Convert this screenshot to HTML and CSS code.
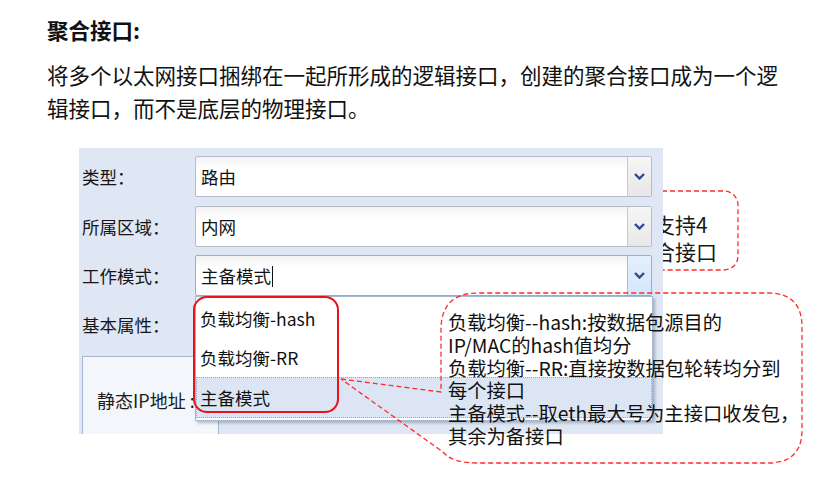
FILE: index.html
```html
<!DOCTYPE html>
<html lang="zh-CN">
<head>
  <meta charset="UTF-8">
  <title>聚合接口</title>
  <link rel="stylesheet" href="styles.css">
</head>
<body>
  <div class="page">
    <h3 class="title">聚合接口:</h3>
    <p class="desc">将多个以太网接口捆绑在一起所形成的逻辑接口，创建的聚合接口成为一个逻<br>辑接口，而不是底层的物理接口。</p>

    <!-- 面板后面的小注释 -->
    <svg class="note-small-frame" width="829" height="494" viewBox="0 0 829 494">
      <rect x="560" y="191" width="178" height="79" rx="14" ry="14" fill="none" stroke="#ff2a2a" stroke-width="1.3" stroke-dasharray="5 3"/>
    </svg>
    <div class="note-small">最多支持4<br>个聚合接口</div>

    <div class="panel">
      <div class="row">
        <span class="label">类型：</span>
        <div class="combo">
          <span class="combo-text">路由</span>
          <span class="combo-btn"><svg width="11" height="7" viewBox="0 0 11 7"><path d="M1 1 L5.5 5.5 L10 1" fill="none" stroke="#30498a" stroke-width="2.4"/></svg></span>
        </div>
      </div>
      <div class="row">
        <span class="label">所属区域：</span>
        <div class="combo">
          <span class="combo-text">内网</span>
          <span class="combo-btn"><svg width="11" height="7" viewBox="0 0 11 7"><path d="M1 1 L5.5 5.5 L10 1" fill="none" stroke="#30498a" stroke-width="2.4"/></svg></span>
        </div>
      </div>
      <div class="row">
        <span class="label">工作模式：</span>
        <div class="combo combo-open">
          <span class="combo-text">主备模式<span class="caret"></span></span>
          <span class="combo-btn"><svg width="11" height="7" viewBox="0 0 11 7"><path d="M1 1 L5.5 5.5 L10 1" fill="none" stroke="#30498a" stroke-width="2.4"/></svg></span>

          <div class="combo-list">
            <div class="combo-item">负载均衡-hash</div>
            <div class="combo-item">负载均衡-RR</div>
            <div class="combo-item selected">主备模式</div>
            <div class="mark"></div>
          </div>
        </div>
      </div>
      <div class="row row-plain">
        <span class="label">基本属性：</span>
      </div>
      <div class="subbox">静态IP地址 :</div>
    </div>

    <!-- 说明气泡 -->
    <svg class="note-frame" width="829" height="494" viewBox="0 0 829 494">
      <path d="M341 379 L441 392 L441 330 Q441 293 478 293 L768 293 Q802 293 802 327 L802 430 Q802 463 768 463 L478 463 Q452 463 443 452 Z" fill="none" stroke="#ff2a2a" stroke-width="1.3" stroke-dasharray="5 3"/>
    </svg>
    <div class="note-text">负载均衡--hash:按数据包源目的<br>IP/MAC的hash值均分<br>负载均衡--RR:直接按数据包轮转均分到<br>每个接口<br>主备模式--取eth最大号为主接口收发包，<br>其余为备接口</div>
  </div>
</body>
</html>
```

FILE: styles.css
```css
body {
  margin: 0;
  padding: 0;
  background-color: #ffffff;
  color: #111;
  font-family: "Noto Sans CJK SC", "Liberation Sans", sans-serif;
}

.page {
  position: relative;
  width: 829px;
  height: 494px;
  overflow: hidden;
}

.title {
  margin: 13px 0 0 47px;
  font-size: 21.5px;
  line-height: 33px;
  font-weight: bold;
}

.desc {
  margin: 12px 0 0 47px;
  font-size: 21.5px;
  line-height: 33px;
}

.note-small-frame,
.note-frame {
  position: absolute;
  left: 0;
  top: 0;
  pointer-events: none;
}

.note-small {
  position: absolute;
  left: 612px;
  top: 211px;
  font-size: 21px;
  line-height: 27px;
  color: #1a1a1a;
}

.panel {
  position: relative;
  z-index: 1;
  width: 584px;
  height: 286px;
  margin: 24px 0 0 79px;
  padding: 8px 11px 0 3px;
  box-sizing: border-box;
  background-color: #dfe7f5;
  overflow: hidden;
}

.row {
  display: flex;
  align-items: center;
  height: 41px;
  margin-bottom: 8.5px;
}

.label {
  width: 113px;
  font-size: 17.5px;
  color: #161616;
}

.combo {
  position: relative;
  display: flex;
  width: 457px;
  height: 41px;
  box-sizing: border-box;
  border: 1px solid #b7bcc8;
  border-radius: 2px;
  background: linear-gradient(#f2f2f2, #ffffff 30%);
}

.combo-text {
  flex: 1;
  padding-left: 5px;
  font-size: 17.5px;
  line-height: 39px;
  color: #111;
}

.caret {
  display: inline-block;
  width: 1px;
  height: 21px;
  margin-left: 1px;
  vertical-align: -4px;
  background-color: #111;
}

.combo-btn {
  display: flex;
  align-items: center;
  justify-content: center;
  width: 23px;
  border-left: 1px solid #c6c9d0;
  background: linear-gradient(#f6f6f6, #e7e7e7);
}

.combo-open {
  border-color: #86b3e3;
}

.combo-open .combo-btn {
  border-left-color: #9cc3ec;
  background: linear-gradient(#e4f0fc, #d2e6fa);
}

.combo-list {
  position: absolute;
  left: -1px;
  top: 40px;
  width: 458px;
  height: 125px;
  box-sizing: border-box;
  padding-top: 2px;
  background-color: #ffffff;
  border: 1px solid #a3b8d8;
  box-shadow: 2px 2px 3px rgba(0, 0, 0, 0.25);
}

.combo-item {
  height: 39px;
  padding-left: 4px;
  font-size: 17.5px;
  line-height: 39px;
  color: #111;
}

.combo-item.selected {
  height: 41px;
  box-sizing: border-box;
  background-color: #dce5f4;
  border: 1px dotted #8fa8d5;
  padding-left: 3px;
}

.mark {
  position: absolute;
  left: -3px;
  top: -1px;
  width: 146px;
  height: 117px;
  box-sizing: border-box;
  border: 2.5px solid #e8141c;
  border-radius: 14px;
}

.row-plain {
  height: 40px;
  margin-top: 0;
}

.subbox {
  width: 137px;
  height: 100px;
  margin-top: 11px;
  box-sizing: border-box;
  padding: 30px 0 0 14px;
  border: 1px solid #a8b7cf;
  background-color: #f3f6fb;
  font-size: 18px;
  line-height: 26px;
  white-space: nowrap;
  color: #1c1c1c;
}

.note-frame {
  z-index: 2;
}

.note-text {
  position: absolute;
  z-index: 3;
  left: 448px;
  top: 311px;
  font-size: 19.3px;
  line-height: 22.8px;
  color: #111;
  white-space: nowrap;
}
```
